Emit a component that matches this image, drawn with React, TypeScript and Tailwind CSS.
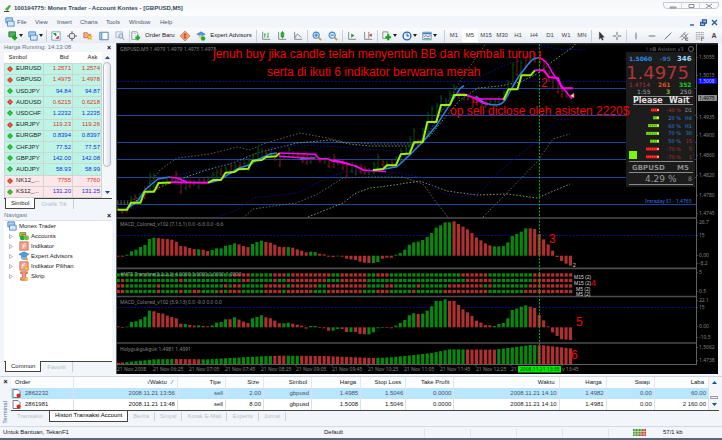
import type { ReactNode } from "react";

const GREEN = "#078a0c";
const RED = "#b0302f";

const symbols = [
  ["EURUSD", "1.2571", "1.2574", false],
  ["GBPUSD", "1.4975", "1.4978", false],
  ["USDJPY", "94.84", "94.87", true],
  ["AUDUSD", "0.6215", "0.6218", false],
  ["USDCHF", "1.2232", "1.2235", true],
  ["EURJPY", "119.23", "119.26", false],
  ["EURGBP", "0.8394", "0.8397", true],
  ["CHFJPY", "77.52", "77.57", true],
  ["GBPJPY", "142.00", "142.08", true],
  ["AUDJPY", "58.93", "58.99", true],
  ["NK12_...", "7755", "7760", false],
  ["KS12_...", "131.20", "131.25", true],
] as const;

const orders = [
  ["2862232", "2008.11.21 13:56", "sell", "2.00", "gbpusd", "1.4985", "1.5046", "0.0000", "2008.11.21 14:10", "1.4982", "0.00", "60.00"],
  ["2861981", "2008.11.21 13:48", "sell", "8.00", "gbpusd", "1.5008", "1.5046", "0.0000", "2008.11.21 14:10", "1.4981", "0.00", "2 160.00"],
];

const columns = [
  ["Order", "w-[62px] text-left"],
  ["√Waktu   ∕", "w-[104px] text-right"],
  ["Tipe", "w-[48px] text-right"],
  ["Size", "w-[38px] text-right"],
  ["Simbol", "w-[48px] text-right"],
  ["Harga", "w-[49px] text-right"],
  ["Stop Loss", "w-[45px] text-right"],
  ["Take Profit", "w-[48px] text-right"],
  ["Waktu", "w-[105px] text-right"],
  ["Harga", "w-[47px] text-right"],
  ["Swap", "w-[48px] text-right"],
  ["Laba", "w-[54px] text-right"],
];

// histogram values, in thirds of a pixel
const macdSlow = [
  -3, -3, 3, 13, 18, 26, 32, 50, 54, 53, 51, 50, 48, 42, 29, 28, 23, 20, 19, 18, 14, 17, 22, 22, 30, 32, 37, 34, 29, 26, 35, 41, 45, 41,
  39, 33, 27, 26, 26, 24, 19, 15, 10, 12, 11, 6, 4, -3, -4, -2, -3, -9, -11, -13, -18, -21, -22, -22, -19, -9, -6, -6, 3, 8, 18, 33, 40,
  42, 47, 56, 68, 84, 91, 100, 100, 103, 95, 87, 79, 68, 55, 46, 37, 31, 28, 28, 29, 40, 59, 65, 72, 82, 82, 80, 65, 49, 34, 15, -4, -16,
  -24, -30,
];
const macdSlowColors =
  "rrgggggggrrrrrrrrrgrrggggggrrrgggrrrrrgrrrrggrrrrgrrrrrrrggrrrgggggggggggggrrrrrrrrrggggggggrrrrrrrrrr";

const macdFast = [
  3, -2, 2, 16, 18, 24, 32, 50, 48, 43, 41, 35, 31, 27, 11, 10, 7, 5, 6, 4, 3, 6, 14, 16, 24, 24, 30, 23, 17, 13, 27, 31, 36, 30, 27, 20,
  12, 12, 14, 11, 8, 5, -4, 4, 4, -2, -3, -10, -10, -5, -5, -14, -14, -14, -20, -21, -21, -15, -3, -2, -2, -3, 5, 13, 22, 36, 42, 40, 41,
  50, 63, 79, 79, 84, 79, 79, 67, 54, 45, 34, 20, 14, 7, 6, 4, 10, 13, 27, 52, 56, 62, 66, 62, 58, 37, 21, 3, -15, -26, -36, -37, -38,
];
const macdFastColors =
  "rrggggggrrrrrrrgrrgrrggggrgrrrgggrrrrggrrrrggrrrggrrgrrrggggrrgggggrggggggrrrrrrrrrrggggggggrrrrrrrrrr";

const trendSteps = [
  [0, 3], [8, 14], [13, 15], [20, 14], [25, 18], [32, 23], [36, 25], [46, 24], [57, 18], [61, 20], [66, 27], [70, 33],
  [74, 44], [84, 43], [87, 48], [92, 57], [95, 56], [101, 47],
];
const trendColors =
  "rrgggggggggggrrrrrrggggggggggggggggrrrgggrrrrrrrrrrrrrrrrrggggggggggggggggggggrrrrrrrgggggggggrrrrrrrr";

const dotRows = [
  "ggggggggggggggggggggggggggrrrrgggggrrrgrrrrrrrrrggrrrrrrggrrrggggggggggggggggrrrrrrggggggggggrrrrrrrrr",
  "grggggggggggggrgggggggggggggrrgggggrggrrrrrrrrrgggrrrrrrggggggggggggggggggggggrrrrrrgggggggggrrrrrrrrr",
  "rrgggggggrggggggggggggggrgrrgggggrrrrrgrrrrrrggrrrrrrrrrggggrrgggggrggggggrrrrrrrrgrggggggggrrrrrrrrrr",
  "rrgggggggrggggrggrrggggrgrrrgggggrrrrgrrrrrrgggrrrrrrrrgggrrrgggggrggggggrrrrrrrrrrggggggggrrrrrrrrrrr",
];

const barX = (i: number) => 116.5 + i * 4.48;

function trendHeight(i: number) {
  for (let k = 1; k < trendSteps.length; k++) {
    const [x0, y0] = trendSteps[k - 1];
    const [x1, y1] = trendSteps[k];
    if (i <= x1) return y0 + ((y1 - y0) * (i - x0)) / (x1 - x0);
  }
  return 47;
}

function Histogram({ values, colors, base }: { values: number[]; colors: string; base: number }) {
  return (
    <g>
      {values.map((v, i) => {
        const h = Math.max(Math.abs(v) / 3, 0.6);
        return <rect key={i} x={barX(i)} y={v > 0 ? base - h : base} width="3.1" height={h} fill={colors[i] === "g" ? GREEN : RED} />;
      })}
    </g>
  );
}

// [x, high, low, up]
const candles: [number, number, number, boolean][] = [
  [118, 206, 210, true], [122, 209, 214, false], [127, 207, 213, false], [131, 196, 209, true], [135, 194, 204, false],
  [140, 193, 202, true], [145, 186, 199, false], [150, 173, 192, true], [154, 173, 188, true], [158, 183, 190, false],
  [163, 180, 187, true], [167, 178, 185, true], [172, 176, 184, false], [176, 171, 183, false], [181, 180, 194, false],
  [186, 180, 190, true], [190, 179, 188, false], [194, 180, 186, true], [199, 177, 189, true], [204, 178, 184, false],
  [208, 176, 183, true], [213, 172, 182, true], [217, 169, 180, true], [221, 168, 176, false], [226, 166, 176, true],
  [231, 163, 173, false], [235, 163, 172, true], [240, 162, 168, false], [244, 160, 171, true], [249, 158, 171, true],
  [253, 153, 165, true], [258, 147, 162, true], [262, 148, 160, true], [266, 150, 158, false], [271, 151, 157, true],
  [275, 154, 161, false], [280, 154, 167, false], [284, 153, 160, true], [289, 147, 157, true], [293, 151, 158, true],
  [298, 152, 159, false], [303, 153, 163, false], [307, 152, 165, false], [311, 156, 164, true], [316, 152, 160, false],
  [320, 157, 163, false], [325, 156, 164, true], [329, 157, 168, false], [334, 154, 168, false], [338, 158, 165, true],
  [343, 160, 170, false], [347, 162, 178, false], [352, 162, 173, true], [356, 164, 176, true], [361, 164, 174, false],
  [365, 166, 175, false], [369, 168, 175, true], [374, 162, 174, true], [378, 154, 170, true], [383, 159, 167, false],
  [387, 161, 168, true], [392, 160, 167, false], [396, 156, 166, true], [401, 148, 163, true], [406, 146, 157, true],
  [410, 136, 152, true], [414, 128, 146, true], [418, 139, 147, false], [423, 128, 143, true], [428, 112, 137, true],
  [432, 106, 123, true], [437, 103, 122, true], [441, 95, 112, true], [446, 98, 108, true], [450, 91, 106, true],
  [454, 84, 98, true], [459, 92, 99, false], [464, 92, 101, true], [468, 94, 101, false], [473, 98, 108, false],
  [477, 98, 106, false], [482, 99, 107, true], [486, 100, 108, false], [490, 99, 106, true], [495, 98, 106, true],
  [499, 96, 104, true], [504, 90, 101, true], [508, 80, 97, true], [513, 62, 88, true], [517, 58, 76, false],
  [521, 60, 74, true], [526, 56, 68, false], [530, 55, 64, false], [535, 52, 63, false], [540, 53, 64, false],
  [544, 61, 73, false], [549, 70, 82, false], [553, 76, 90, false], [558, 82, 94, false], [562, 88, 98, false],
  [567, 90, 98, false],
];

const hLines = [88.5, 115.5, 142.5, 159.5, 177.5, 204.5];

function PriceChart() {
  return (
    <g>
      {hLines.map((y) => (
        <line key={y} x1="117" x2="696" y1={y} y2={y} stroke="#1f459c" strokeWidth="1" />
      ))}
      <line x1="117" x2="696" y1="81.5" y2="81.5" stroke="#0c0c98" strokeWidth="1" strokeDasharray="2 1.4" />

      {/* bands */}
      <g fill="none" strokeWidth="0.9" strokeDasharray="1.5 1.8">
        <g stroke="#6b6b6b">
          <path d="M117 201h13l10-4 7-10 13-17 17-12 33-4 27-7 13 3 13-6 37-11 27 5 17 4 30 2 42 0 13-12 13-21 7-11 15-25 30-43 12-16" />
          <path d="M243 218l10-9 43-6 20-8 27-17 27-1 33 0 20 7 13 18 12 15M483 217l20-20 34-35 16-23 17-5" />
        </g>
        <g stroke="#7fae7b">
          <path d="M117 203h16l14-10 23-10 33-12 30-8 24-10 40-10 33-3 20 4 20 2 40 0 20-10 17-21 13-15 18-12 22-2 20-4 17-8 16-13 20-14 16-20 18-12 23-3" />
          <path d="M308 217l35-14 13-10 14-5 17-2 33-5 27 10 30 4 30-1 30 4 33-14" />
        </g>
        <g stroke="#1010a0">
          <path d="M173 176l30-6 40-10 27-12 30-3 43 2 17 2 43 2 17-11 20-27 15-20 20-14 28-13 20-7 17-13 18 3 28 1" />
          <path d="M217 217l20-7 16-12 44-5 26-13 20-8 27 0 30 1 23 5 20 15 17 4 20-4 20-22 37-30 20-21 13-1" />
        </g>
      </g>

      {candles.map(([x, top, bottom, up]) => (
        <g key={x} stroke={up ? "#0a5a0a" : "#8e200f"} strokeWidth="0.9">
          <line x1={x} x2={x} y1={top} y2={bottom} />
          <path d={`M${x - 1.5} ${bottom - 2}h1.5M${x} ${top + 3}h1.5`} />
        </g>
      ))}

      {/* moving averages */}
      <g fill="none" strokeWidth="1.5" strokeLinejoin="round">
        <g stroke="#2f7fe8">
          <path d="M127 208l10-6 8-12 8-7 5-4 12-2M208 183l12-3 9-6 10-6 10-3 8-5 13-6 7-1M300 159l15-1M374 170.7l12-2 11-2 13-12 13-13 14-17 16-25 7-11 4-3" />
          <path d="M476 96c5 6 12 9 20 9 5 0 7-2 9-5l14-24 11-14c3-4 6-4.500 10-4" />
        </g>
        <g stroke="#ff00f4">
          <path d="M170 177.300l8 1 9 4M279 156.300l26 1.700 9 .5M279 153l36 1.300 4 4.500h9l5 2.500 7 1 17 4 7 4 10 .5 12 .6M333 160l10 2 12 4 8 4" />
          <path d="M458 94l8 .5c10 3 12 8 22 10M466 95.500l10 2.500 6 1h21" />
          <path d="M538 58c6 .5 9 4 14 14l11 16 9 11" />
        </g>
        <g strokeWidth="2">
          <path stroke="#9cf20c" d="M117.500 209.700h9.500l4-7h9.500l4-11h9.500l4.500-8.700 12.500-.5M208 182.700l5.500-2.700h7.500l4.500-7.300 9-.7 4-2.700 9.700-.6 4.300-8 9.300-.7 4.500-3 9.700-.7 3.500-3" />
          <path stroke="#9cf20c" d="M373 170l10-1 4-3.700h9l4.700-11 9-.7 4.300-11.300h8.700l4.600-20.300h9l4.700-17h9l4-10h13M503.500 100l5-10.700h9l4-14h9l4.500-5" />
          <path stroke="#ff00f4" d="M171 182.300l37 .4M535 70.300h9l5 7 9 .7 4 10.300h11" />
        </g>
      </g>
      <path d="M570 96l4-3v5z" fill="#eee" stroke="#d22" strokeWidth="0.700" />
      <text x="645" y="203" fontSize="5" fill="#3d6fe6" className="font-['Noto_Sans']">Intraday S1 -  1.4765</text>
    </g>
  );
}

const priceTicks: [number, string][] = [
  [59, "1.5055"], [77, "1.5015"], [119, "1.4935"], [137, "1.4900"], [157, "1.4860"], [177, "1.4820"], [197, "1.4780"], [215, "1.4745"],
  [224, "26.7"], [237, "15"], [257, "0.00"], [265, "-8.2"], [274, "5"], [293, "0.5"], [302, "22.1"], [309, "15"], [328, "0.00"],
  [339, "-10.5"], [349, "1.5062"], [362, "1.4738"],
];

const timeTicks: [number, string][] = [
  [117, "21 Nov 2008"], [153, "21 Nov 06:25"], [189, "21 Nov 07:05"], [225, "21 Nov 07:45"], [261, "21 Nov 08:25"], [296, "21 Nov 09:05"],
  [332, "21 Nov 09:45"], [368, "21 Nov 10:25"], [404, "21 Nov 11:05"], [440, "21 Nov 11:45"], [476, "21 Nov 12:25"], [511, "21"], [562, "v 13:45"],
];

const strength: [string, string, string, string, number][] = [
  ["-40 %", "D1", "#b03030", "#999", 8],
  ["20 %", "H4", "#2f7fd8", "#2f7fd8", 6],
  ["60 %", "H1", "#2f7fd8", "#2f7fd8", 11],
  ["70 %", "30", "#2f7fd8", "#2f7fd8", 13],
  ["50 %", "15", "#2f7fd8", "#b03030", 9],
  ["-70 %", "5", "#b03030", "#b03030", 13],
  ["-70 %", "1", "#b03030", "#b03030", 13],
];

function AssistantPanel() {
  return (
    <g className="font-['DejaVu_Sans']">
      <text x="646" y="51" fontSize="5" fill="#777">! nB Asisten v3</text>
      <circle cx="691" cy="49" r="2.500" fill="none" stroke="#888" strokeWidth="0.800" />
      <rect x="626" y="52" width="69" height="135" fill="#1c1c1c" />
      <g fontWeight="bold">
        <text x="629" y="61" fontSize="6" fill="#2f8be8">1.5060</text>
        <text x="660" y="61" fontSize="6" fill="#2b6fae">-95</text>
        <text x="677" y="61" fontSize="7" fill="#9bdcff">346</text>
      </g>
      <text x="626" y="79" fontSize="18" fill="#b23434">1.4975</text>
      <text x="629" y="87" fontSize="6" fill="#b23434">1.4714</text>
      <g fontSize="6" fontWeight="bold">
        <text x="658" y="87" fill="#e0541c">261</text>
        <text x="679" y="87" fill="#12d61e">352</text>
        <text x="666" y="94" fill="#7fbf12">3</text>
      </g>
      <text x="637" y="94" fontSize="6" fill="#aaa">1:55</text>
      <text x="680" y="94" fontSize="6" fill="#aaa">250</text>
      <path d="M633 96.500h60M633 104.500h60" stroke="#aaa" strokeWidth="0.800" />
      <text x="633" y="103" fontSize="8" fontWeight="bold" fill="#e4e4e4">Please</text>
      <text x="669" y="103" fontSize="8" fontWeight="bold" fill="#e4e4e4">Wait</text>
      {strength.map(([pct, tf, c1, c2, w], i) => {
        const y = 110 + i * 7.8;
        const down = pct.startsWith("-");
        return (
          <g key={i} fontSize="5">
            <rect x={659 - w} y={y - 1.5} width={w} height="3" fill={down ? "#f01414" : "#74d80c"} />
            <path d={`M${659 - w} ${y}h${w}`} stroke={down ? "#ff7a6a" : "#3a7a10"} strokeWidth="0.600" strokeDasharray="1 1" />
            <rect x="657" y={y - 1} width="2" height="2" fill={down ? "#ff9a90" : "#c8ff60"} />
            <text x="681" y={y + 2} textAnchor="end" fill={c1}>{pct}</text>
            <text x="692" y={y + 2} textAnchor="end" fill={c2}>{tf}</text>
          </g>
        );
      })}
      <rect x="629" y="151" width="8" height="8" fill="#7df20a" />
      <path d="M629 161.500h64M629 172.500h64M629 184.500h64" stroke="#8a8a8a" strokeWidth="1" />
      <text x="632" y="170" fontSize="7" fontWeight="bold" fill="#8c8c8c">GBPUSD</text>
      <text x="677" y="170" fontSize="7" fontWeight="bold" fill="#8c8c8c">M5</text>
      <text x="645" y="182" fontSize="9" fill="#999">4.29 %</text>
      <text x="688" y="181" fontSize="6" fill="#888">8</text>
    </g>
  );
}

function Chart() {
  return (
    <svg viewBox="116 43 602 331" className="block w-full bg-black font-['DejaVu_Sans'] whitespace-pre" role="img" aria-label="GBPUSD,M5">
      <defs>
        <clipPath id="price">
          <rect x="117" y="44" width="579" height="174" />
        </clipPath>
      </defs>
      <rect x="116" y="43" width="602" height="1.500" fill="#2b2f2f" />
      <path d="M116.500 43v331" stroke="#5b6268" />

      <text x="120" y="51" fontSize="5" fill="#808080" className="font-['Noto_Sans']">GBPUSD,M5  1.4979 1.4979 1.4975 1.4975</text>
      <g clipPath="url(#price)">
        <PriceChart />
      </g>

      <path d="M117 235.500h579M117 307.500h579" stroke="#0c0c80" strokeWidth="1" strokeDasharray="2 1.400" />
      <Histogram values={macdSlow} colors={macdSlowColors} base={255.7} />
      {dotRows.map((row, r) =>
        row.split("").map((c, i) => (
          <rect key={`${r}-${i}`} x={barX(i)} y={273.3 + r * 5.5} width="3.300" height="3.300" fill={c === "g" ? GREEN : RED} />
        )),
      )}
      <Histogram values={macdFast} colors={macdFastColors} base={327.3} />
      <Histogram values={dotRows[0].split("").map((_, i) => trendHeight(i))} colors={trendColors} base={364} />
      <line x1="539.500" x2="539.500" y1="44" y2="364" stroke="#0cb414" strokeWidth="1" strokeDasharray="2 1.400" />

      <path d="M117 218h579M117 268.300h579M117 296.500h579M117 343h579" stroke="#4c4c4c" strokeWidth="1.700" />
      <path d="M117 364.500h580M696.500 44v320" stroke="#777" strokeWidth="0.800" fill="none" />

      <g className="font-['Noto_Sans']" fontSize="5" fill="#858585">
        <text x="120" y="226">MACD_Colored_v102 (7,13,1) 0.0 -6.6 0.0 -6.6</text>
        <text x="120" y="276" fill="#8f978f">#MTF Trendine(2,2,2,2) 4.0000 3.0000 2.0000 1.0000</text>
        <text x="120" y="304">MACD_Colored_v102 (5,9,13) 0.0 -9.0 0.0 0.0</text>
        <text x="120" y="351">Holygukgukguk 1.4981 1.4991</text>
        {priceTicks.map(([y, t], i) => (
          <g key={i}>
            <path d={`M696 ${y - 1.5}h2`} stroke="#666" strokeWidth="0.600" />
            <text x="699" y={y}>{t}</text>
          </g>
        ))}
        {timeTicks.map(([x, t]) => (
          <g key={x}>
            <path d={`M${x} 364v2.500`} stroke="#777" strokeWidth="0.600" />
            <text x={x} y="371">{t}</text>
          </g>
        ))}
      </g>

      <rect x="698" y="78" width="19" height="6" fill="#0a0af0" />
      <text x="699" y="83" fontSize="5" fill="#c8c8ff" className="font-['Noto_Sans']">1.5008</text>
      <rect x="698" y="95" width="19" height="6" fill="#8a8a8a" />
      <text x="699" y="100" fontSize="5" fill="#111" className="font-['Noto_Sans']">1.4975</text>
      <rect x="518" y="366" width="43" height="6.500" fill="#06e806" />
      <text x="520" y="371" fontSize="5" fill="#053f05" className="font-['Noto_Sans']">2008.11.21 13:35</text>

      <g className="font-['Liberation_Sans']" fontSize="5" fill="#ddd">
        <text x="574" y="279">M15 (2)</text>
        <text x="574" y="285">M15 (2)</text>
        <text x="576" y="291">M5 (2)</text>
        <text x="576" y="296">M5 (2)</text>
        <text x="573" y="267">2</text>
      </g>
      <AssistantPanel />

      <g className="font-['Liberation_Sans']" fontSize="12" fill="#f20505">
        <text x="213" y="58">jenuh buy jika candle telah menyentuh BB dan kembali turun</text>
        <text x="267" y="76">serta di ikuti 6 indikator berwarna merah</text>
        <text x="450" y="115">op sell diclose oleh asisten 2220$</text>
        <text x="471" y="103" fontSize="7">11</text>
        <text x="537" y="59" fontSize="10">1</text>
        <text x="541" y="87">2</text>
        <text x="549" y="243">3</text>
        <text x="591" y="286" fontSize="9">4</text>
        <text x="576" y="326">5</text>
        <text x="571" y="359">6</text>
      </g>
    </svg>
  );
}

function Icon({ children }: { children: ReactNode }) {
  return (
    <svg viewBox="0 0 12 12" className="size-[10px] shrink-0" fill="none" stroke="#555" strokeWidth="1" aria-hidden="true">
      {children}
    </svg>
  );
}

const icons = {
  newChart: <><path d="M1 1h8v6H1z" fill="#49b05a" stroke="#2a7a3a" /><path d="M8 5v6M5 8h6" stroke="#10a010" strokeWidth="2.500" /></>,
  windows: <><path d="M1 1h8v6H1z" fill="#a9cdf3" stroke="#4a83c2" /><path d="M3 5h8v6H3z" fill="#d5e8fb" stroke="#4a83c2" /></>,
  market: <><path d="M1 1h10v10H1z" fill="#fff" stroke="#5f9bd0" /><path d="M3 3h3v3z" fill="#1ba01b" stroke="#1ba01b" /><path d="M9 9H6l3-3z" fill="#d33" stroke="#d33" /></>,
  target: <><circle cx="6" cy="6" r="3.500" /><path d="M6 0v4M6 8v4M0 6h4M8 6h4" /></>,
  star: <><path d="M1 2h4l1 2h3v4H1z" fill="#f0b090" stroke="#c9694a" /><path d="M8 4l1 2 2 .5-1.500 1.500.5 2-2-1-2 1 .5-2L5 6.500 7 6z" fill="#ffd23c" stroke="#d28a10" strokeWidth=".7" /></>,
  panel: <><path d="M1 1.500h10v9H1z" fill="#fff" stroke="#2f72b8" /><path d="M2 2h2v8H2z" fill="#5fa2e2" stroke="none" /></>,
  tester: <><path d="M1 1h8v7H1z" fill="#e6eef6" stroke="#9db3c8" /><circle cx="7" cy="6" r="2.500" fill="#cfe2f3" stroke="#7792aa" /><path d="M9 8l2 3" stroke="#7792aa" /></>,
  order: <><path d="M1 1h6l1 2v7H1z" fill="#fff" stroke="#789" /><path d="M3 3h3M3 5h3" stroke="#9ab" strokeWidth=".7" /><path d="M8 5v6M5 8h6" stroke="#1faa1f" strokeWidth="2.500" /></>,
  meta: <><path d="M6 0l6 6-6 6-6-6z" fill="#f0a070" stroke="#d0623a" strokeWidth=".7" /><path d="M6 2.500v7M4.500 4.500h3M4.500 7.500h3" stroke="#b03a18" /></>,
  expert: <><path d="M1 4l5-3 5 3-5 2z" fill="#4aa0e0" stroke="#2b73b3" strokeWidth=".7" /><circle cx="5.500" cy="7" r="2.200" fill="#f2c58c" stroke="none" /><circle cx="8.500" cy="9" r="2.700" fill="#1fae2e" stroke="none" /></>,
  navExpert: <><path d="M0 4l6-3 6 3-6 3z" fill="#4aa0e0" stroke="#2b73b3" strokeWidth=".7" /><path d="M3 6v3l3 1.500L9 9V6L6 7.500z" fill="#7fbcec" stroke="#2b73b3" strokeWidth=".6" /><circle cx="9" cy="9.500" r="1.800" fill="#f2a53c" stroke="none" /></>,
  bars: <><path d="M2 1v9h9" stroke="#777" /><path d="M4.500 3v5M4.500 4h1.500M8.500 2v6M7 7h1.500" stroke="#2a9a3a" /></>,
  candles: <><path d="M2 1v9h9" stroke="#777" /><path d="M6.500 0v9" stroke="#1a8f2a" /><path d="M5 2h3v5H5z" fill="#2bb53d" stroke="#1a8f2a" /></>,
  line: <><path d="M2 1v9h9" stroke="#777" /><path d="M3 8c1-5 3-5 4-3l3 3" stroke="#567f6a" /></>,
  zoomIn: <><circle cx="5" cy="5" r="3.700" fill="#cfe7fc" stroke="#3a86cc" strokeWidth="1.300" /><path d="M3 5h4M5 3v4" stroke="#1e62ad" /><path d="M8 8l3 3" stroke="#c9963c" strokeWidth="2" /></>,
  zoomOut: <><circle cx="5" cy="5" r="3.700" fill="#cfe7fc" stroke="#3a86cc" strokeWidth="1.300" /><path d="M3 5h4" stroke="#1e62ad" /><path d="M8 8l3 3" stroke="#c9963c" strokeWidth="2" /></>,
  scroll: <><path d="M2 1v9h9" stroke="#777" /><path d="M5 3v5l4-2.500z" fill="#2a9a3a" stroke="none" /></>,
  shift: <><path d="M2 1v9h9M7 1v8" stroke="#777" /><path d="M10.500 3v4L7 5z" fill="#c33" stroke="none" /></>,
  indicator: <><path d="M1 1h6v8H1z" fill="#edf3ed" stroke="#7a8a7a" /><path d="M7.500 4v7M4 7.500h7" stroke="#14a514" strokeWidth="2.600" /></>,
  clock: <><circle cx="6" cy="6" r="4.700" fill="#e6f2ff" stroke="#2568b5" strokeWidth="1.600" /><path d="M6 3v3h2.500" stroke="#234" /></>,
  template: <><path d="M1 1.500h10v9H1z" fill="#e9f3fc" stroke="#4889c4" /><path d="M1 3h10" stroke="#4889c4" strokeWidth="2" /><path d="M2.500 7l2-1.500L7 7l3-1.500" stroke="#c44" /><path d="M2.500 9h7" stroke="#4a4" /></>,
  cursor: <path d="M4 1v9l2-2 1.500 3 1.200-.6L7.300 7.500H10z" fill="#333" stroke="#333" strokeWidth=".4" />,
  cross: <path d="M6 1v4M6 7v4M1 6h4M7 6h4" />,
  vertical: <path d="M6 2v8" />,
  horizontal: <path d="M2 6h8" />,
  trend: <path d="M2 10l8-8" />,
  channel: <><path d="M1 8l7-7M3 11l8-8M3 5l4 4M6 3l3 4" stroke="#666" /><path d="M8 8.500h3M8 11h3M8 8v3" stroke="#444" /></>,
  fibo: <><path d="M1 2h10M1 4.500h10M1 7h10M1 9.500h5" stroke="#888" strokeDasharray="1.500 .5" /><path d="M8 8v4M8 8.500h3" /></>,
  accounts: <><path d="M1 2h7v5H1z" fill="#f0c040" stroke="#2a9a2a" /><circle cx="4" cy="8" r="3" fill="#28a93a" stroke="none" /><circle cx="9" cy="8" r="3" fill="#7bc043" stroke="none" /><path d="M3 4h5" stroke="#c33" /></>,
  func: <><path d="M1 1h10v10H1z" fill="#f3a48c" stroke="#d5694c" /><path d="M8 3c-3-1-2 6-4 6M4 6h4" stroke="#fff" /></>,
  custom: <><path d="M1 1h10v10H1z" fill="#f3a48c" stroke="#d5694c" /><path d="M7 3c-3-1-2 5-4 5M3 5h4" stroke="#fff" /><circle cx="9" cy="9" r="2.200" fill="#f5cf3c" stroke="#b98a1a" strokeWidth=".5" /></>,
  script: <><path d="M2 1h8v2H8v5h2v3H2V8h2V3H2z" fill="#ef9b7e" stroke="#c8603e" /><circle cx="9.500" cy="9.500" r="2" fill="#f5cf3c" stroke="none" /></>,
};

type IconName = keyof typeof icons;

function ToolButton({ icon, label, menu }: { icon: IconName; label: string; menu?: boolean }) {
  return (
    <button aria-label={label} className={`flex h-full shrink-0 items-center justify-center gap-px ${menu ? "w-5" : "w-4"}`}>
      <Icon>{icons[icon]}</Icon>
      {menu && <svg viewBox="0 0 4 3" className="h-[3px] w-1" aria-hidden="true"><path d="M0 0h4L2 3z" fill="#222" /></svg>}
    </button>
  );
}

function Separator() {
  return <span className="mx-px h-3 w-px shrink-0 bg-[#c9cfd8]" />;
}

function Toolbar() {
  return (
    <div className="flex h-[15px] items-center overflow-hidden bg-gradient-to-b from-[#fbfcfd] to-[#e6ebf2] pl-[5px]">
      <ToolButton icon="newChart" label="New chart" menu />
      <ToolButton icon="windows" label="Profiles" menu />
      <Separator />
      <ToolButton icon="market" label="Market watch" />
      <ToolButton icon="target" label="Data window" />
      <ToolButton icon="star" label="Navigator" />
      <ToolButton icon="panel" label="Terminal" />
      <ToolButton icon="tester" label="Tester" />
      <Separator />
      <button className="flex w-[46px] shrink-0 items-center gap-1 whitespace-nowrap"><Icon>{icons.order}</Icon>Order Baru</button>
      <ToolButton icon="meta" label="Editor" />
      <button className="flex w-[62px] shrink-0 items-center justify-center gap-1 whitespace-nowrap"><Icon>{icons.expert}</Icon>Expert Advisors</button>
      <Separator />
      <ToolButton icon="bars" label="Bar chart" />
      <ToolButton icon="candles" label="Candlesticks" />
      <ToolButton icon="line" label="Line chart" />
      <Separator />
      <ToolButton icon="zoomIn" label="Zoom in" />
      <ToolButton icon="zoomOut" label="Zoom out" />
      <Separator />
      <ToolButton icon="scroll" label="Auto scroll" />
      <ToolButton icon="shift" label="Chart shift" />
      <Separator />
      <ToolButton icon="indicator" label="Indicators" menu />
      <ToolButton icon="clock" label="Periods" menu />
      <ToolButton icon="template" label="Templates" menu />
      <span className="w-1 shrink-0" />
      <Separator />
      {["M1", "M5", "M15", "M30", "H1", "H4", "D1", "W1", "MN"].map((tf) => (
        <button key={tf} className={`h-[13px] w-4 shrink-0 text-center text-[#444] ${tf === "M5" ? "bg-white" : ""}`}>{tf}</button>
      ))}
      <Separator />
      <ToolButton icon="cursor" label="Cursor" />
      <ToolButton icon="cross" label="Crosshair" />
      <Separator />
      <ToolButton icon="vertical" label="Vertical line" />
      <ToolButton icon="horizontal" label="Horizontal line" />
      <ToolButton icon="trend" label="Trend line" />
      <ToolButton icon="channel" label="Channel" />
      <ToolButton icon="fibo" label="Fibonacci" />
      <button className="w-3 shrink-0 text-center text-[7px] font-bold text-[#444]">A</button>
    </div>
  );
}

function PanelTitle({ children }: { children: ReactNode }) {
  return (
    <div className="flex h-[9px] items-center justify-between pr-px text-[#66758a]">
      <span>{children}</span>
      <button aria-label="Close" className="text-[7px] font-bold text-black">×</button>
    </div>
  );
}

function Tabs({ active, other }: { active: string; other: string }) {
  return (
    <div className="flex h-[11px] border-t border-[#444] pl-px">
      <button className="-mt-px border-x border-b border-[#444] bg-white px-[5px]">{active}</button>
      <button className="border-r border-[#ccd] px-[6px] text-[#b5bcc7]">{other}</button>
    </div>
  );
}

function Arrow({ up }: { up?: boolean }) {
  return <svg viewBox="0 0 5 3" className="h-[3px] w-[5px]" aria-hidden="true"><path d={up ? "M0 3h5L2.500 0z" : "M0 0h5L2.500 3z"} fill="#1d4d8c" /></svg>;
}

function MarketWatch() {
  return (
    <section>
      <PanelTitle>Harga Running: 14:13:08</PanelTitle>
      <div className="flex bg-white">
        <table className="h-[146px] flex-1 border-collapse">
          <thead>
            <tr className="h-[11px]">
              <th className="pl-1 text-left font-normal">Simbol</th>
              <th className="w-[29px] pr-1 text-right font-normal">Bid</th>
              <th className="w-[29px] pr-1 text-right font-normal">Ask</th>
            </tr>
          </thead>
          <tbody>
            {symbols.map(([name, bid, ask, up]) => (
              <tr key={name} className={`${name.includes("_") ? "bg-[#ffe6ea]" : "bg-[#bdf4e6]"} ${up ? "text-[#1030e0]" : "text-[#e03020]"}`}>
                <td className="border border-[#cbd8d2] p-0 text-[#222]">
                  <span className="flex items-center gap-[3px] pl-[2px]">
                    <svg viewBox="0 0 6 6" className="size-[6px]" aria-hidden="true">
                      <path d="M3 0l3 3-3 3-3-3z" fill={up ? "#17a51c" : "#d92a1a"} />
                      <path d="M3 1.500v3M1.500 3h3" stroke="#fff" strokeOpacity=".4" strokeWidth=".7" />
                    </svg>
                    {name}
                  </span>
                </td>
                <td className="border border-[#cbd8d2] py-0 pr-px pl-0 text-right">{bid}</td>
                <td className="border border-[#cbd8d2] py-0 pr-px pl-0 text-right">{ask}</td>
              </tr>
            ))}
          </tbody>
        </table>
        <div className="flex w-[10px] flex-col items-center justify-between bg-[#f4f6fa] py-1">
          <Arrow up />
          <span className="mt-[3px] mb-auto h-[105px] w-2 rounded-sm border border-[#b4bcc8] bg-gradient-to-r from-white to-[#dde2ea]" />
          <Arrow />
        </div>
      </div>
      <Tabs active="Simbol" other="Grafik Tik" />
    </section>
  );
}

const tree: [IconName, string][] = [
  ["accounts", "Accounts"],
  ["func", "Indikator"],
  ["navExpert", "Expert Advisors"],
  ["custom", "Indikator Pilihan"],
  ["script", "Skrip"],
];

function Navigator() {
  return (
    <section className="mt-[2px] flex flex-1 flex-col">
      <PanelTitle>Navigasi</PanelTitle>
      <ul className="flex-1 border-t border-[#dbe1ea] bg-white pl-[3px]">
        <li className="flex h-[10px] items-center gap-[2px]"><Icon>{icons.windows}</Icon>Monex Trader</li>
        {tree.map(([icon, label]) => (
          <li key={label} className="flex h-[10px] items-center pl-[2px]">
            <svg viewBox="0 0 4 5" className="mr-[6px] h-[5px] w-1" fill="none" stroke="#999" strokeWidth=".7" aria-hidden="true"><path d="M.5.500l3 2-3 2z" /></svg>
            <Icon>{icons[icon]}</Icon>
            <span className="ml-[2px]">{label}</span>
          </li>
        ))}
      </ul>
      <Tabs active="Common" other="Favorit" />
    </section>
  );
}

function Terminal() {
  return (
    <section className="flex h-[50px] border-t border-[#cfd6e0]">
      <div className="flex w-[11px] flex-col items-center justify-between text-[#50709a]">
        <button aria-label="Close" className="text-[7px] font-bold text-black">×</button>
        <span className="mb-[2px] rotate-180 [writing-mode:vertical-rl]">Terminal</span>
      </div>
      <div className="min-w-0 flex-1">
        <div className="flex border-b border-[#444] bg-white">
          <table className="w-full table-fixed border-collapse">
            <thead>
              <tr className="h-[11px] bg-[#fbfcfd]">
                {columns.map(([name, cls], i) => (
                  <th key={i} className={`${cls} border-r border-[#e4e8ee] px-1 py-0 font-normal whitespace-pre`}>{name}</th>
                ))}
              </tr>
            </thead>
            <tbody>
              {orders.map((row, r) => (
                <tr key={row[0]} className={`h-[11px] ${r === 0 ? "bg-[#b9e6fc] text-[#456]" : ""}`}>
                  {row.map((cell, i) => (
                    <td key={i} className={`border-r border-[#dde2e8] py-0 pr-[2px] pl-0 whitespace-nowrap ${i === 0 ? "text-left" : "text-right"}`}>
                      {i === 0 ? (
                        <span className="flex items-center gap-1 pl-px">
                          <svg viewBox="0 0 9 9" className="size-[9px]" aria-hidden="true">
                            <path d="M1 .500h5l2 2v6H1z" fill="#fff" stroke="#556" strokeWidth=".8" />
                            <circle cx="6.500" cy="6.500" r="2" fill="#e02818" />
                          </svg>
                          {cell}
                        </span>
                      ) : cell}
                    </td>
                  ))}
                </tr>
              ))}
            </tbody>
          </table>
          <div className="flex w-[10px] shrink-0 flex-col items-center justify-between bg-[#f4f6fa] py-1">
            <Arrow up />
            <span className="mt-auto mb-[4px] h-[3px] w-2 border border-[#99a]" />
            <Arrow />
          </div>
        </div>
        <div className="flex h-[11px] items-center text-[#b9bfc9]">
          <button className="w-[38px]">Transaksi</button>
          <button className="-mt-px h-[11px] border-x border-b border-[#444] bg-white px-[5px] text-black">Histori Transaksi Account</button>
          {["Berita", "Sinyal", "Kotak E-Mail", "Experts", "Jurnal"].map((t) => (
            <button key={t} className="border-r border-[#ccd2db] px-[5px]">{t}</button>
          ))}
        </div>
      </div>
      <div className="w-[3px]" />
    </section>
  );
}

function StatusBar() {
  return (
    <footer className="flex h-3 items-center border-t border-[#d5dae2] pl-[3px]">
      <span className="w-[321px]">Untuk Bantuan, TekanF1</span>
      <span>Default</span>
      <div className="ml-9 flex h-2 flex-1">
        {[0, 1, 2, 3, 4].map((n) => <span key={n} className="flex-1 border-r border-[#dfe4eb]" />)}
      </div>
      <svg viewBox="0 0 13 7" className="mr-4 ml-6 h-[7px] w-[13px]" aria-hidden="true">
        <path d="M0 0h13v7H0z" fill="#c8452e" />
        <path d="M0 0h11L5 7H0z" fill="#4f9c3a" />
        <path d="M2 0v7M5 0v7M8 0v7M11 0v7M0 2.500h13M0 5h13" stroke="#fff" strokeWidth=".5" />
      </svg>
      <span className="w-[60px] pl-px">57/1 kb</span>
    </footer>
  );
}

export default function App() {
  return (
    <div className="flex min-h-screen flex-col bg-[#f2f5fa] font-['Liberation_Sans',sans-serif] text-[6px] leading-[9px] text-[#222]">
      <header className="flex h-4 items-center bg-gradient-to-b from-[#f6f8fb] to-[#fcfdfe] pl-1">
        <svg viewBox="0 0 9 9" className="mr-[2px] size-[8px]" aria-hidden="true">
          <path d="M1 6l5-5 2 1-4 6z" fill="#49ad35" />
          <path d="M0 8.500h6" stroke="#222" />
        </svg>
        <h1 className="flex-1 font-bold text-[#34465a]">100194775: Monex Trader - Account Kontes - [GBPUSD,M5]</h1>
        <div className="mr-[3px] mb-[5px] flex h-[7px] rounded-b-sm border border-[#c3c9d2] text-[#777]">
          {["M3 4h6v1H3z", "M4 1.500h5v3H4z", "M3 1l6 4M9 1L3 5"].map((d, i) => (
            <button key={d} aria-label={["Minimize", "Maximize", "Close"][i]} className="flex w-[18px] items-center justify-center border-r border-[#d5dae1] last:border-0">
              <svg viewBox="0 0 12 6" className="h-[6px] w-3" fill="none" stroke="#8a8f96"><path d={d} /></svg>
            </button>
          ))}
        </div>
      </header>
      <nav className="flex h-3 items-center pl-[5px]">
        <Icon>{icons.windows}</Icon>
        <div className="flex flex-1 pl-[2px] text-[#4b5968]">
          <a href="#file" className="w-[18px]">File</a>
          <a href="#view" className="w-[22px]">View</a>
          <a href="#insert" className="w-[23px]">Insert</a>
          <a href="#charts" className="w-[26px]">Charts</a>
          <a href="#tools" className="w-[23px]">Tools</a>
          <a href="#window" className="w-[31px]">Window</a>
          <a href="#help">Help</a>
        </div>
        <div className="flex gap-[4px] pr-1">
          {["M1 6h4", "M2.500 1h4v3h-4zM.5 3.500h4v3h-4z", "M1 1l5 5M6 1L1 6"].map((d, i) => (
            <button key={d} aria-label={["Minimize chart", "Restore chart", "Close chart"][i]}>
              <svg viewBox="0 0 7 7" className="size-[7px]" fill="none" stroke="#2b5c9c" strokeWidth="1.400"><path d={d} /></svg>
            </button>
          ))}
        </div>
      </nav>
      <Toolbar />
      <main className="flex pr-1">
        <aside className="mr-1 ml-1 flex w-[108px] shrink-0 flex-col pb-[2px]">
          <MarketWatch />
          <Navigator />
        </aside>
        <div className="min-w-0 flex-1">
          <Chart />
        </div>
      </main>
      <div className="h-[2px]" />
      <Terminal />
      <StatusBar />
      <div className="h-[2px] bg-[#5c6678]" />
    </div>
  );
}
